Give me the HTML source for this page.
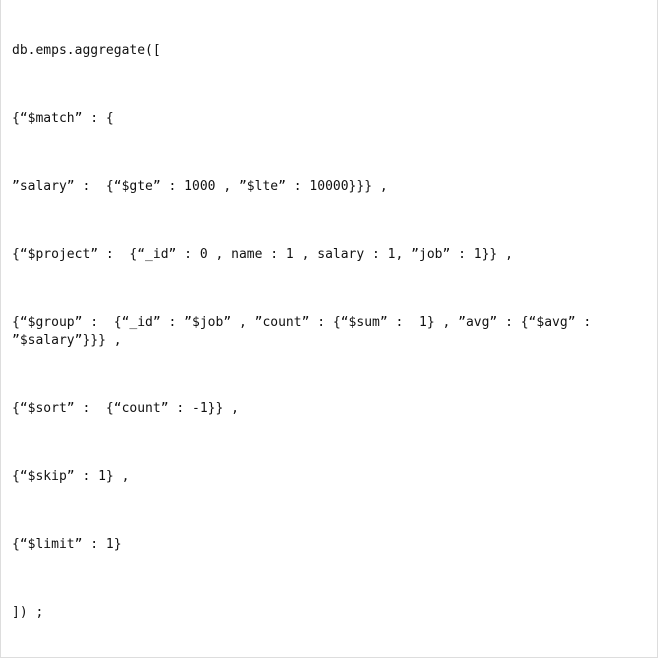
<!DOCTYPE html>
<html><head><meta charset="utf-8"><style>
html,body{margin:0;padding:0;background:#fff;}
#box{position:absolute;left:0;top:0;width:656px;height:657px;border:1px solid #ddd;border-top:none;}
.l{position:absolute;left:12px;font-family:"DejaVu Sans Mono","Liberation Mono",monospace;font-size:13px;line-height:18px;color:#111;white-space:pre;}
</style></head><body>
<div id="box"></div>
<div class="l" style="top:42px">db.emps.aggregate([</div>
<div class="l" style="top:110px">{“$match” : {</div>
<div class="l" style="top:178px">”salary” :  {“$gte” : 1000 , ”$lte” : 10000}}} ,</div>
<div class="l" style="top:246px">{“$project” :  {“_id” : 0 , name : 1 , salary : 1, ”job” : 1}} ,</div>
<div class="l" style="top:314px">{“$group” :  {“_id” : ”$job” , ”count” : {“$sum” :  1} , ”avg” : {“$avg” :</div>
<div class="l" style="top:332px">”$salary”}}} ,</div>
<div class="l" style="top:400px">{“$sort” :  {“count” : -1}} ,</div>
<div class="l" style="top:468px">{“$skip” : 1} ,</div>
<div class="l" style="top:536px">{“$limit” : 1}</div>
<div class="l" style="top:604px">]) ;</div>
</body></html>
